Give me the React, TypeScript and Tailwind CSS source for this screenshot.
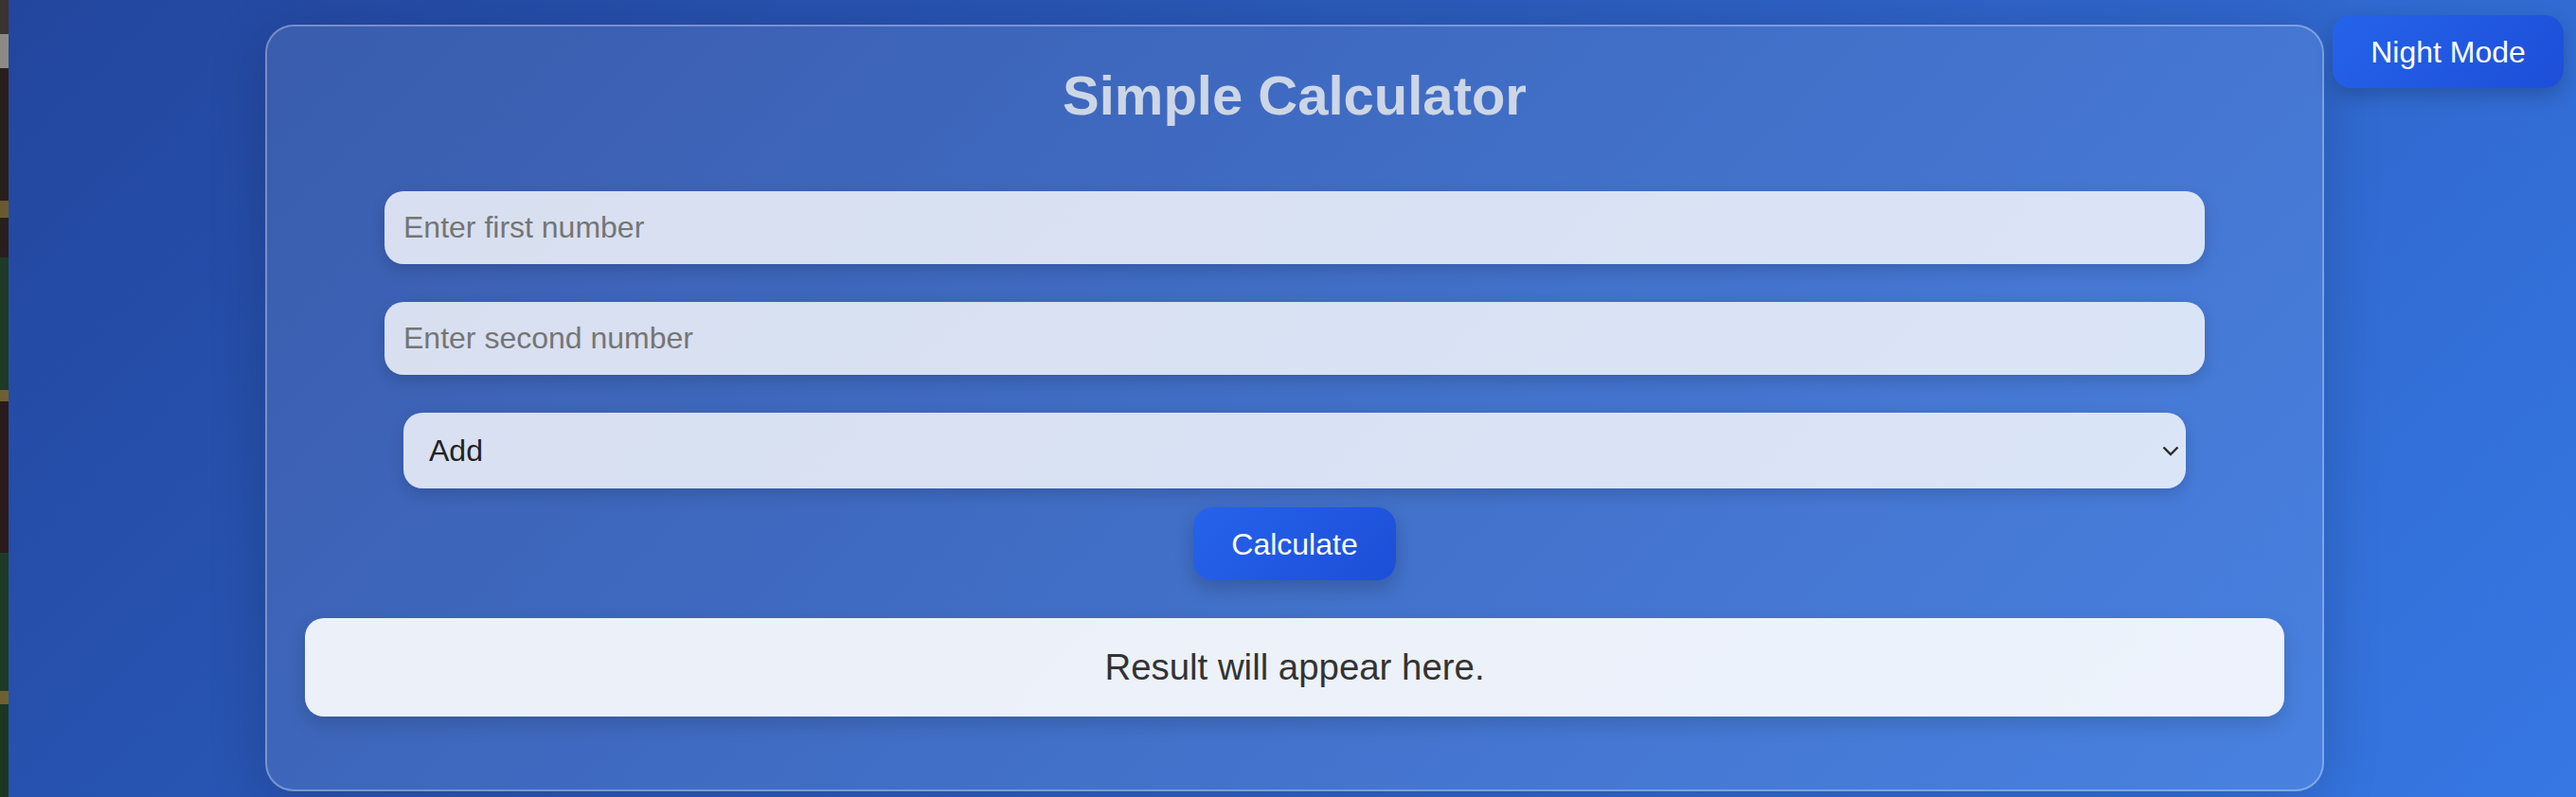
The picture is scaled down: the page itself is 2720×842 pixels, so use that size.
import React from "react";

export default function App() {
  return (
    <div className="relative flex h-[842px] w-full overflow-hidden bg-[linear-gradient(135deg,#22469e,#3677e3)] font-['Liberation_Sans',Arial,sans-serif]">
      <div className="flex w-[9px] shrink-0 flex-col">
        <div className="h-[36px] bg-[#3b332e]" />
        <div className="h-[36px] bg-[#8c8a82]" />
        <div className="h-[140px] bg-[#2a1e1c]" />
        <div className="h-[18px] bg-[#6b5a2e]" />
        <div className="h-[42px] bg-[#2a1e1c]" />
        <div className="h-[140px] bg-[#1f3a26]" />
        <div className="h-[12px] bg-[#6f6030]" />
        <div className="h-[160px] bg-[#2a1a1a]" />
        <div className="h-[146px] bg-[#1e3a26]" />
        <div className="h-[14px] bg-[#6f6030]" />
        <div className="flex-1 bg-[#1d3624]" />
      </div>

      <div className="flex-1 pl-[271px]">
        <div className="mt-[26px] flex w-[2174px] flex-col items-center rounded-[30px] border-2 border-white/30 bg-white/10 px-[40px] pt-[40px] pb-[77px] shadow-[0_10px_60px_rgba(0,0,0,0.18)]">
          <h1 className="h-[66px] text-[58px] font-bold leading-[66px] text-[#cdd6e6]">
            Simple Calculator
          </h1>

          <input
            type="number"
            placeholder="Enter first number"
            className="mt-[68px] h-[77px] w-[1922px] rounded-[20px] bg-white/80 px-[20px] text-[32px] text-[#222] shadow-[0_6px_16px_rgba(0,0,0,0.15)] outline-none placeholder:text-[#757575]"
          />
          <input
            type="number"
            placeholder="Enter second number"
            className="mt-[40px] h-[77px] w-[1922px] rounded-[20px] bg-white/80 px-[20px] text-[32px] text-[#222] shadow-[0_6px_16px_rgba(0,0,0,0.15)] outline-none placeholder:text-[#757575]"
          />

          <div className="relative mt-[40px] h-[80px] w-[1882px]">
            <select className="h-full w-full appearance-none rounded-[20px] bg-white/80 pl-[27px] text-[32px] text-[#222] shadow-[0_6px_16px_rgba(0,0,0,0.15)] outline-none">
              <option>Add</option>
              <option>Subtract</option>
              <option>Multiply</option>
              <option>Divide</option>
            </select>
            <svg
              className="pointer-events-none absolute right-[7px] top-[35px]"
              width="18"
              height="11"
              viewBox="0 0 18 11"
              fill="none"
            >
              <path d="M1.5 1.5 L9 9 L16.5 1.5" stroke="#2b2b2b" strokeWidth="2.4" />
            </svg>
          </div>

          <button className="mt-[20px] h-[77px] w-[214px] rounded-[20px] bg-[linear-gradient(135deg,#2563eb,#1d4ed8)] text-[32px] text-white shadow-[0_8px_20px_rgba(0,0,0,0.2)]">
            Calculate
          </button>

          <div className="mt-[40px] flex h-[104px] w-full items-center justify-center rounded-[20px] bg-white/90 text-[38.4px] text-[#333] shadow-[0_8px_20px_rgba(0,0,0,0.15)]">
            Result will appear here.
          </div>
        </div>
      </div>

      <button className="absolute right-[13px] top-[16px] h-[77px] w-[244px] rounded-[20px] bg-[linear-gradient(135deg,#2563eb,#1d4ed8)] text-[32px] text-white shadow-[0_8px_20px_rgba(0,0,0,0.2)]">
        Night Mode
      </button>
    </div>
  );
}
